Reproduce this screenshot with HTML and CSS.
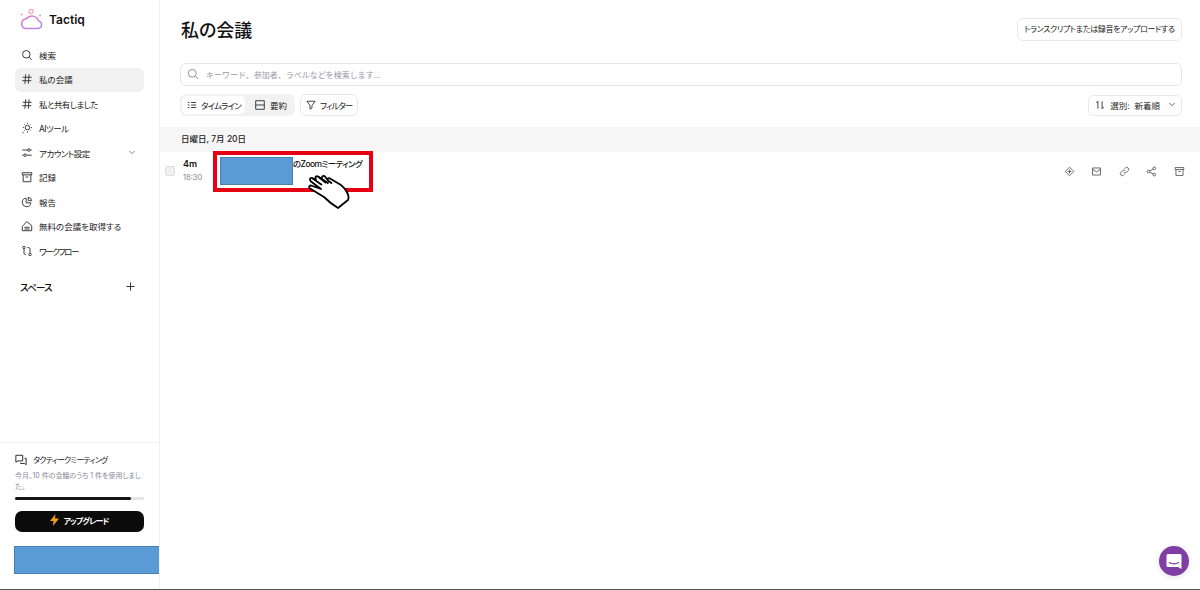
FILE: index.html
```html
<!DOCTYPE html>
<html lang="ja">
<head>
<meta charset="utf-8">
<title>Tactiq</title>
<link rel="stylesheet" href="styles.css">
</head>
<body>
<div class="app">
  <aside class="sidebar">
    <div class="logo">
      <svg class="logo-mark" width="24" height="22" viewBox="0 0 24 22" fill="none">
        <defs><linearGradient id="lg" x1="0" y1="0" x2="24" y2="22" gradientUnits="userSpaceOnUse"><stop offset="0" stop-color="#f472b6"/><stop offset="1" stop-color="#a78bfa"/></linearGradient></defs>
        <path d="M6 20.500h13a3.800 3.800 0 0 0 .6-7.500 7 7 0 0 0-12.300-2.200A5 5 0 0 0 6 20.500z" stroke="url(#lg)" stroke-width="1.500"/>
        <circle cx="12" cy="3.500" r="2.200" stroke="#f4a6b8" stroke-width="1.200"/>
        <circle cx="2.500" cy="6.500" r="1.100" fill="#f4a6b8"/><circle cx="21" cy="7.500" r="1.100" fill="#f4a6b8"/>
      </svg>
      <span class="logo-text">Tactiq</span>
    </div>
    <nav class="nav">
      <a class="nav-item"><svg class="ic" viewBox="0 0 14 14"><circle cx="6.200" cy="6.200" r="4.400"/><path d="M9.500 9.500 12.500 12.500"/></svg>検索</a>
      <a class="nav-item active"><svg class="ic" viewBox="0 0 14 14"><path d="M2 5h10.500M1.500 9h10.500M5.500 1.500 4.500 12.500M9.500 1.500 8.500 12.500"/></svg>私の会議</a>
      <a class="nav-item tight"><svg class="ic" viewBox="0 0 14 14"><path d="M2 5h10.500M1.500 9h10.500M5.500 1.500 4.500 12.500M9.500 1.500 8.500 12.500"/></svg>私と共有しました</a>
      <a class="nav-item tight"><svg class="ic" viewBox="0 0 14 14"><circle cx="7.500" cy="6.500" r="2.600"/><path d="M7.500 1v1.200M12.800 6.500h-1.300M11 2.800l-.9.900M11 10.200l-.9-.9M3.900 2.800l.9.900M2.200 6.500h1.200M4 9.800l-.8.800M1.500 12.500h1.500M7.500 11v1.500"/></svg>AIツール</a>
      <a class="nav-item tight"><svg class="ic" viewBox="0 0 14 14"><path d="M1.500 3.500h6M11 3.500h1.500M1.500 9.500h1.500M7 9.500h5.500"/><circle cx="9.200" cy="3.500" r="1.500"/><circle cx="4.800" cy="9.500" r="1.500"/></svg>アカウント設定<svg class="chev" viewBox="0 0 10 6"><path d="M1.500 1 5 4.500 8.500 1"/></svg></a>
      <a class="nav-item"><svg class="ic" viewBox="0 0 14 14"><path d="M1.500 2h11v2.500h-11zM2.500 4.500v8h9v-8M5.500 7h3"/></svg>記録</a>
      <a class="nav-item"><svg class="ic" viewBox="0 0 14 14"><path d="M6 2.500a5 5 0 1 0 5.500 5.500H6zM8.500 1.500a4.500 4.500 0 0 1 4 4h-4z"/></svg>報告</a>
      <a class="nav-item"><svg class="ic" viewBox="0 0 14 14"><path d="M1.500 12.500v-5l2-2 3-3.500 5 3.500 1 2v5zM4 8.500h6M4 10.500h6"/></svg>無料の会議を取得する</a>
      <a class="nav-item tighter"><svg class="ic" viewBox="0 0 14 14"><circle cx="3.500" cy="3" r="1.500"/><circle cx="10.500" cy="11" r="1.500"/><path d="M3.500 5v4.500a1.500 1.500 0 0 0 1.500 1.500h1M10.500 9V4.500A1.500 1.500 0 0 0 9 3H7.500"/></svg>ワークフロー</a>
    </nav>
    <div class="spaces"><span>スペース</span><svg class="plus" viewBox="0 0 10 10"><path d="M5 .5v9M.5 5h9"/></svg></div>
    <div class="usage">
      <div class="usage-title"><svg class="ic usage-ic" viewBox="0 0 14 14"><path d="M1 1.500h8v6.500H3.500L1 9.500zM11 5h2v7.500l-2-1.500H6.500V10"/></svg>タクティークミーティング</div>
      <p class="usage-text">今月、10 件の会議のうち 1 件を使用しました。</p>
      <div class="bar"><div class="bar-fill" style="width:90%"></div></div>
      <button class="upgrade"><svg width="9" height="12" viewBox="0 0 9 12"><path d="M5.500 0 0 7h3.500L3 12l6-7.500H5z" fill="#f59e0b"/></svg>アップグレード</button>
    </div>
    <div class="user-block"></div>
  </aside>
  <main class="main">
    <header class="head">
      <h1>私の会議</h1>
      <button class="btn upload">トランスクリプトまたは録音をアップロードする</button>
    </header>
    <div class="search"><svg class="search-ic" viewBox="0 0 14 14"><circle cx="6.200" cy="6.200" r="4.600"/><path d="M9.600 9.600 13 13"/></svg><span>キーワード、参加者、ラベルなどを検索します...</span></div>
    <div class="tools">
      <div class="segment">
        <span class="seg on"><svg class="ic sm" viewBox="0 0 12 12"><path d="M1 3h2M1 6h2M1 9h2M5 3h6M5 6h6M5 9h6"/></svg>タイムライン</span>
        <span class="seg plain"><svg class="ic" viewBox="0 0 14 14"><path d="M2 2h10v10H2zM2 7h10"/></svg>要約</span>
      </div>
      <button class="btn filter"><svg class="ic sm" viewBox="0 0 12 12"><path d="M1 1.500h10L7.200 6.500v3L4.800 11V6.500z"/></svg>フィルター</button>
      <button class="btn sort"><svg class="ic sm" viewBox="0 0 12 12"><path d="M3.500 10.500v-9L1.500 3.500M8.500 1.500v9l2-2"/></svg>選別: &nbsp;新着順<svg class="chev2" viewBox="0 0 10 6"><path d="M1.500 1 5 4.500 8.500 1"/></svg></button>
    </div>
    <div class="date-band">日曜日, 7月 20日</div>
    <div class="row">
      <span class="check"></span>
      <div class="dur"><b>4m</b><span>18:30</span></div>
      <div class="title-box">
        <span class="redact"></span><span class="title">のZoomミーティング</span>
        <svg class="hand" width="50" height="40" viewBox="0 0 50 40" fill="#fff" stroke="#000" stroke-width="1.800" stroke-linejoin="round">
          <path d="M34 37 44 29C46 25 42 18 37 14L26 7.500C24 6.500 23 8 24 9.500L21 5.500C19 4 17 6 18 8L14 5.500C12 4.500 10.500 6.500 12 8.500L8 7C6 6.500 5 8.500 7 10.500L17 18 7 14.500C5 14.500 4.500 16.500 6 17.500L20 26C24 30 29 34 34 37Z"/>
          <path d="M14 5.500 22 12M18 8 24.500 12.500M24 9.500 28 12.500M8 7 18 14" fill="none"/>
        </svg>
      </div>
      <div class="actions">
        <svg class="ic act" viewBox="0 0 14 14"><path d="M7 1.500 12.500 7 7 12.500 1.500 7zM7 4.500v5M4.500 7h5"/></svg>
        <svg class="ic act" viewBox="0 0 14 14"><path d="M2 2.500h10v9H2zM2 4l5 3.500L12 4"/></svg>
        <svg class="ic act" viewBox="0 0 14 14"><path d="M6 8a2.500 2.500 0 0 0 3.600 0l2-2A2.500 2.500 0 0 0 8 2.500l-.8.800M8 6a2.500 2.500 0 0 0-3.600 0l-2 2A2.500 2.500 0 0 0 6 11.500l.8-.8"/></svg>
        <svg class="ic act" viewBox="0 0 14 14"><circle cx="3.200" cy="7" r="1.700"/><circle cx="10.500" cy="3" r="1.700"/><circle cx="10.500" cy="11" r="1.700"/><path d="M4.700 6.200 9 3.800M4.700 7.800 9 10.200"/></svg>
        <svg class="ic act" viewBox="0 0 14 14"><path d="M1.500 2h11v2.500h-11zM2.500 4.500v7.500h9V4.500M5.500 7h3"/></svg>
      </div>
    </div>
  </main>
</div>
<div class="chat"><svg width="16" height="17" viewBox="0 0 16 17"><path d="M2 1h12a1.500 1.500 0 0 1 1.500 1.500V16l-3.500-2H2A1.500 1.500 0 0 1 .5 12.500v-10A1.500 1.500 0 0 1 2 1z" fill="#fff"/><path d="M3.500 9.500c2.500 1.800 6.500 1.800 9 0" fill="none" stroke="#7e3ea6" stroke-width="1.200" stroke-linecap="round"/></svg></div>
</body>
</html>
```

FILE: styles.css
```css
* { box-sizing: border-box; }
html, body { margin: 0; height: 100%; overflow: hidden; }
body {
  font-family: "Inter", "Noto Sans CJK JP", sans-serif;
  font-feature-settings: "palt";
  color: #111;
  background: #fff;
  font-size: 8.500px;
  border-bottom: 1px solid #555;
}
.app { display: flex; height: 589px; }
.sidebar {
  width: 160px;
  flex: none;
  display: flex;
  flex-direction: column;
  border-right: 1px solid #f0f0f0;
}
.logo { display: flex; align-items: center; gap: 6px; height: 38px; margin-bottom: 5px; padding-left: 19px; }
.logo-text { font-size: 12px; font-weight: 600; color: #111; }
.nav { display: flex; flex-direction: column; padding: 0 15px; }
.nav-item {
  display: flex;
  align-items: center;
  gap: 6px;
  height: 24.500px;
  padding: 0 0 1px 6px;
  border-radius: 6px;
  color: #222;
}
.nav-item.active { background: #f1f1f1; }
.nav-item.tight { letter-spacing: -.55px; }
.nav-item.tighter { letter-spacing: -1.400px; }
.ic { width: 12px; height: 12px; flex: none; fill: none; stroke: #333; stroke-width: 1.100; }
.ic.sm { width: 10px; height: 10px; }
.chev { width: 8px; height: 5px; margin-left: auto; margin-right: 8px; fill: none; stroke: #777; stroke-width: 1.100; }
.spaces {
  display: flex;
  justify-content: space-between;
  align-items: center;
  margin-top: 16px;
  padding: 0 24px 0 20px;
  font-size: 9.500px;
  font-weight: 500;
  letter-spacing: -.8px;
}
.plus { width: 9px; height: 9px; fill: none; stroke: #333; stroke-width: 1.100; }
.usage {
  margin-top: auto;
  padding: 8px 15px 0;
  border-top: 1px solid #f2f2f2;
}
.usage-title { display: flex; align-items: center; gap: 6px; font-size: 8px; letter-spacing: -.8px; color: #222; height: 17px; }
.usage-ic { stroke: #222; }
.usage-text { margin: 2px 0 0; font-size: 7px; line-height: 11px; color: #8a8a96; }
.bar { height: 3px; margin-top: 5px; background: #e5e5e5; border-radius: 2px; }
.bar-fill { height: 100%; background: #161616; border-radius: 2px; }
.upgrade {
  display: flex;
  align-items: center;
  justify-content: center;
  gap: 4px;
  width: 100%;
  height: 21px;
  margin-top: 11px;
  padding: 0 0 3px;
  border: 0;
  border-radius: 7px;
  background: #0b0b0b;
  color: #fff;
  font: 600 8px "Inter", "Noto Sans CJK JP", sans-serif;
  font-feature-settings: "palt";
  letter-spacing: -.9px;
}
.user-block {
  height: 28px;
  margin: 14px 0 15px 14px;
  background: #5b9bd5;
  border: 1px solid #4a80ae;
  border-right: 0;
}
.main { flex: 1; min-width: 0; display: flex; flex-direction: column; }
.head {
  display: flex;
  justify-content: space-between;
  align-items: center;
  height: 63px;
  padding: 0 18px 5px 21px;
}
h1 { margin: 0; font-size: 18px; font-weight: 500; color: #111; }
.btn {
  display: inline-flex;
  align-items: center;
  gap: 5px;
  background: #fff;
  border: 1px solid #e9e9e9;
  border-radius: 6px;
  color: #222;
  font: 400 8.500px "Inter", "Noto Sans CJK JP", sans-serif;
  font-feature-settings: "palt";
  height: 22px;
  padding: 0 7px 1px;
}
.upload {
  height: 23px;
  width: 165px;
  justify-content: center;
  padding: 0 0 1px;
  white-space: nowrap;
  font-size: 8px;
  letter-spacing: -.36px;
}
.search {
  display: flex;
  align-items: center;
  gap: 7px;
  height: 23px;
  margin: 0 18px 0 20px;
  padding: 0 0 1px 6px;
  border: 1px solid #e7e7e7;
  border-radius: 6px;
  color: #9a9aa3;
  font-size: 8px;
  font-feature-settings: normal;
}
.search-ic { width: 12px; height: 12px; fill: none; stroke: #8b8b8b; stroke-width: 1.100; }
.tools { display: flex; align-items: center; gap: 5px; margin: 8px 18px 0 20px; height: 22px; }
.segment { display: flex; height: 22px; padding: 2px; background: #f2f2f2; border-radius: 6px; }
.seg { display: flex; align-items: center; gap: 4px; padding: 0 4px 1px 5px; border-radius: 5px; font-size: 8.500px; color: #222; letter-spacing: -.8px; }
.seg.on { background: #fff; }
.seg.plain { padding: 0 6px 1px 9px; letter-spacing: 0; }
.filter { padding: 0 5px 1px; gap: 4px; letter-spacing: -1px; }
.sort { margin-left: auto; height: 21px; gap: 5px; padding: 0 5px 1px 6px; }
.chev2 { width: 8px; height: 5px; margin-left: 3px; fill: none; stroke: #555; stroke-width: 1.100; }
.date-band {
  height: 25px;
  margin-top: 11px;
  padding: 6px 0 0 21px;
  background: #f6f6f6;
  font-size: 8.500px;
  line-height: 12px;
  font-weight: 500;
  color: #222;
}
.row { display: flex; height: 40px; padding-right: 18px; position: relative; }
.check {
  width: 10px;
  height: 10px;
  margin: 14px 0 0 5px;
  background: #f0f0f0;
  border: 1px solid #dedede;
  border-radius: 2px;
}
.dur { display: flex; flex-direction: column; gap: 4px; margin: 6px 0 0 8px; width: 30px; }
.dur b { font-size: 9px; font-weight: 600; line-height: 11px; }
.dur span { font-size: 7.500px; line-height: 10px; color: #888; }
.title-box {
  position: relative;
  display: flex;
  align-items: flex-start;
  width: 160px;
  height: 41px;
  margin: -1px 0 0;
  border: 4px solid #e60012;
  padding: 2px 0 0 3px;
  background: #fff;
}
.redact { width: 73px; height: 28px; background: #5b9bd5; border: 1px solid #4a80ae; flex: none; }
.title { font-size: 8.500px; font-weight: 500; margin-top: 0; letter-spacing: -.62px; color: #111; white-space: nowrap; }
.hand { position: absolute; left: 87px; top: 16px; }
.actions { display: flex; align-items: center; gap: 16.500px; margin: 0 -2.500px 2px auto; }
.act { width: 11px; height: 11px; stroke: #555; }
.chat {
  position: absolute;
  left: 1159px;
  top: 546px;
  width: 30px;
  height: 30px;
  border-radius: 50%;
  background: #7e3ea6;
  display: flex;
  align-items: center;
  justify-content: center;
  box-shadow: 0 1px 6px rgba(0,0,0,.12);
}
```
